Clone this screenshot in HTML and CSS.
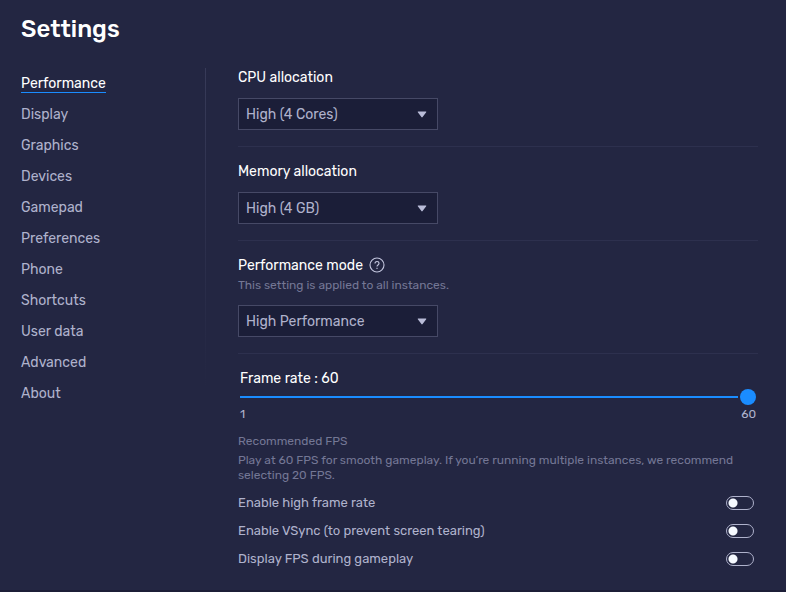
FILE: index.html
```html
<!DOCTYPE html>
<html lang="en">
<head>
<meta charset="utf-8">
<title>Settings</title>
<link rel="stylesheet" href="styles.css">
</head>
<body>
<div class="window">
  <h1 class="title">Settings</h1>
  <div class="columns">
    <nav class="sidebar">
      <a class="nav-link active" href="#performance" aria-current="page">Performance</a>
      <a class="nav-link" href="#display">Display</a>
      <a class="nav-link" href="#graphics">Graphics</a>
      <a class="nav-link" href="#devices">Devices</a>
      <a class="nav-link" href="#gamepad">Gamepad</a>
      <a class="nav-link" href="#preferences">Preferences</a>
      <a class="nav-link" href="#phone">Phone</a>
      <a class="nav-link" href="#shortcuts">Shortcuts</a>
      <a class="nav-link" href="#userdata">User data</a>
      <a class="nav-link" href="#advanced">Advanced</a>
      <a class="nav-link" href="#about">About</a>
    </nav>
    <div class="separator"></div>
    <main class="content">
      <section class="group">
        <label class="label" for="cpu">CPU allocation</label>
        <div class="dropdown">
          <select id="cpu" class="select"><option>High (4 Cores)</option></select>
          <svg class="arrow" viewBox="0 0 10 7" width="10" height="7"><path d="M1.2 .5h7.6q.9 0 .4.8L5.6 6.1q-.6.8-1.2 0L.8 1.3Q.3.5 1.2.5z"/></svg>
        </div>
      </section>
      <section class="group">
        <label class="label" for="memory">Memory allocation</label>
        <div class="dropdown">
          <select id="memory" class="select"><option>High (4 GB)</option></select>
          <svg class="arrow" viewBox="0 0 10 7" width="10" height="7"><path d="M1.2 .5h7.6q.9 0 .4.8L5.6 6.1q-.6.8-1.2 0L.8 1.3Q.3.5 1.2.5z"/></svg>
        </div>
      </section>
      <section class="group">
        <div class="label-row">
          <label class="label" for="mode">Performance mode</label>
          <button class="help" type="button" aria-label="Help">
            <svg viewBox="0 0 16 16" width="16" height="16"><circle cx="8" cy="8" r="7"/><path d="M6 6.6C6 5.3 6.8 4.5 8 4.5s2 .8 2 1.9c0 1.5-2 1.6-2 3.1"/><path d="M8 10.8v1.1"/></svg>
          </button>
        </div>
        <p class="hint">This setting is applied to all instances.</p>
        <div class="dropdown after-hint">
          <select id="mode" class="select"><option>High Performance</option></select>
          <svg class="arrow" viewBox="0 0 10 7" width="10" height="7"><path d="M1.2 .5h7.6q.9 0 .4.8L5.6 6.1q-.6.8-1.2 0L.8 1.3Q.3.5 1.2.5z"/></svg>
        </div>
      </section>
      <section class="group">
        <div class="frame-rate">
          <label class="label" for="fps">Frame rate : 60</label>
          <input id="fps" class="slider" type="range" min="1" max="60" value="60">
          <div class="scale"><span>1</span><span>60</span></div>
        </div>
        <h2 class="note-title">Recommended FPS</h2>
        <p class="note">Play at 60 FPS for smooth gameplay. If you’re running multiple instances, we recommend selecting 20 FPS.</p>
        <div class="toggles">
          <label class="toggle-row">Enable high frame rate<input class="toggle" type="checkbox" role="switch"></label>
          <label class="toggle-row">Enable VSync (to prevent screen tearing)<input class="toggle" type="checkbox" role="switch"></label>
          <label class="toggle-row">Display FPS during gameplay<input class="toggle" type="checkbox" role="switch"></label>
        </div>
      </section>
    </main>
  </div>
</div>
</body>
</html>
```
FILE: styles.css
```css
* {
  box-sizing: border-box;
}

body {
  margin: 0;
  background: #232642;
  color: #afb2cc;
  font-family: Rubik, Roboto, "Noto Sans", sans-serif;
  font-size: 14px;
  line-height: 18px;
}

.window {
  min-height: 100vh;
  padding: 13px 28px 0 21px;
  border-bottom: 2px solid #1c1e37;
}

.title {
  margin: 0 0 23px;
  color: #fff;
  font-size: 24px;
  font-weight: 500;
  line-height: 32px;
}

.columns {
  display: flex;
  align-items: flex-start;
}

.sidebar {
  display: flex;
  flex-direction: column;
  align-items: flex-start;
  gap: 13px;
  width: 184px;
  padding-top: 7px;
}

.nav-link {
  color: inherit;
  text-decoration: none;
}

.nav-link.active {
  box-shadow: inset 0 -1px #1a8cff;
  color: #fff;
}

.separator {
  width: 1px;
  height: 320px;
  background: linear-gradient(#373a58, #232642);
}

.content {
  flex: 1;
  margin-left: 32px;
}

.group + .group {
  margin-top: 16px;
  padding-top: 15px;
  border-top: 1px solid #2d304e;
}

.label {
  display: block;
  color: #fff;
  line-height: 20px;
}

.label-row {
  display: flex;
  align-items: center;
  gap: 6px;
  height: 20px;
}

.help {
  display: flex;
  padding: 0 0 2px;
  border: 0;
  background: none;
}

.help svg {
  fill: none;
  stroke: #c3c6de;
  stroke-width: 1.1;
}

.hint,
.note,
.note-title {
  margin: 0;
  color: #747795;
  font-size: 12px;
  font-weight: 400;
  line-height: 16px;
}

.hint {
  margin-top: 1px;
}

.dropdown {
  display: grid;
  align-items: center;
  width: 200px;
  margin-top: 10px;
}

.dropdown.after-hint {
  margin-top: 12px;
}

.select {
  grid-area: 1 / 1;
  height: 32px;
  padding: 2px 28px 0 7px;
  border: 1px solid #464966;
  border-radius: 0;
  appearance: none;
  background: #1b1e38;
  color: #afb2cc;
  font: inherit;
}

.arrow {
  grid-area: 1 / 1;
  justify-self: end;
  margin-right: 11px;
  fill: #b9bcd8;
  pointer-events: none;
}

.frame-rate {
  padding: 0 2px;
}

.slider {
  display: block;
  width: 100%;
  height: 16px;
  margin: 0;
  appearance: none;
  background: linear-gradient(#1a8cff, #1a8cff) left center / calc(100% - 18px) 2px no-repeat;
}

.slider::-webkit-slider-thumb {
  width: 16px;
  height: 16px;
  border-radius: 50%;
  appearance: none;
  background: #1a8cff;
}

.scale {
  display: flex;
  justify-content: space-between;
  margin-top: 1px;
  font-size: 12px;
  line-height: 16px;
}

.note-title {
  margin-top: 11px;
}

.note {
  margin-top: 4px;
  line-height: 15px;
}

.toggles {
  margin-top: 6px;
  padding-right: 4px;
}

.toggle-row {
  display: flex;
  align-items: center;
  justify-content: space-between;
  height: 28px;
  font-size: 13px;
}

.toggle {
  width: 28px;
  height: 14px;
  margin: 0;
  border: 1px solid #afb2cc;
  border-radius: 7px;
  appearance: none;
  background: radial-gradient(circle at 6px 6px, #f5f9ff 4px, transparent 5px);
}

.toggle:checked {
  background: radial-gradient(circle at 20px 6px, #f5f9ff 4px, #1a8cff 5px);
}
```
